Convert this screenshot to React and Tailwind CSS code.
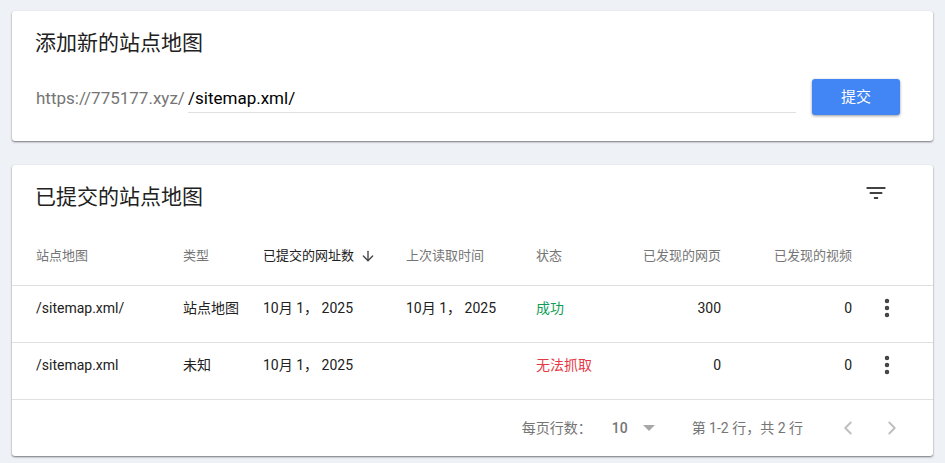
import React from 'react';
import { ArrowDown, ChevronLeft, ChevronRight, EllipsisVertical } from 'lucide-react';

const fontStack = 'font-["Roboto","Noto_Sans_CJK_SC",sans-serif]';
const gridCols = 'grid grid-cols-[147px_80px_143px_130px_90px_95px_131px_1fr] pl-6';

const rows = [
  { path: '/sitemap.xml/', type: '站点地图', submitted: '10月 1， 2025', read: '10月 1， 2025', status: '成功', statusColor: 'text-[#0f9d58]', pages: '300', videos: '0' },
  { path: '/sitemap.xml', type: '未知', submitted: '10月 1， 2025', read: '', status: '无法抓取', statusColor: 'text-[#e53945]', pages: '0', videos: '0' },
];

function Card({ className, children }) {
  return (
    <section className={`mx-3 rounded-[3px] bg-white shadow-[0_1px_2px_rgba(60,64,67,0.7)] ${className}`}>
      {children}
    </section>
  );
}

export default function App() {
  return (
    <div className={`${fontStack} flex h-[463px] w-[945px] flex-col gap-6 overflow-hidden bg-[#eef1f6] pt-[11px]`}>
      <Card className="h-[130px] px-6 pt-4">
        <h2 className="-ml-px text-[21px] leading-8 text-[#212121]">添加新的站点地图</h2>
        <div className="mt-5 flex items-start">
          <span className="w-[152px] pt-[7px] text-[17px] leading-6 text-[#757575]">https://775177.xyz/</span>
          <div className="h-[34px] w-[608px] border-b border-[#e0e0e0] pt-[7px] text-[17px] leading-6 text-[#000]">/sitemap.xml/</div>
          <button className="ml-4 h-9 w-[88px] rounded-[3px] bg-[#4285f4] text-[15px] text-white shadow-[0_1px_3px_rgba(0,0,0,0.4)]">提交</button>
        </div>
      </Card>

      <Card className="h-[291px]">
        <div className="flex items-start justify-between pl-6 pr-[36px] pt-4">
          <h2 className="-ml-px text-[21px] leading-8 text-[#212121]">已提交的站点地图</h2>
          <svg width="24" height="24" viewBox="0 0 24 24" fill="#424242" className="mr-[9px] scale-x-105">
            <path d="M10 18h4v-2h-4v2zM3 6v2h18V6H3zm3 7h12v-2H6v2z" />
          </svg>
        </div>

        <div className={`${gridCols} mt-[27px] h-[46px] items-start border-b border-[#e0e0e0] pt-1 text-[13px] leading-6 text-[#757575]`}>
          <span>站点地图</span>
          <span>类型</span>
          <span className="flex items-center gap-2 text-[#212121]">
            已提交的网址数
            <ArrowDown size={16} strokeWidth={2} className="-ml-[2px] text-[#424242]" />
          </span>
          <span>上次读取时间</span>
          <span>状态</span>
          <span className="whitespace-nowrap text-right">已发现的网页</span>
          <span className="text-right">已发现的视频</span>
        </div>

        {rows.map((row) => (
          <div key={row.path} className={`${gridCols} h-[57px] items-start border-b border-[#e0e0e0] pt-[10px] text-sm leading-6 text-[#212121]`}>
            <span>{row.path}</span>
            <span>{row.type}</span>
            <span>{row.submitted}</span>
            <span>{row.read}</span>
            <span className={`whitespace-nowrap ${row.statusColor}`}>{row.status}</span>
            <span className="text-right">{row.pages}</span>
            <span className="text-right">{row.videos}</span>
            <div className="flex justify-center pr-[10px]">
              <EllipsisVertical size={24} strokeWidth={2.5} className="-ml-px text-[#424242]" />
            </div>
          </div>
        ))}

        <div className="flex h-14 items-center justify-end pr-[30px] text-sm text-[#757575]">
          <span>每页行数：</span>
          <span className="ml-5 font-medium">10</span>
          <span className="ml-[15px] h-0 w-0 border-x-[6px] border-t-[6px] border-x-transparent border-t-[#a8a8a8]" />
          <span className="ml-[37px]">第 1-2 行，共 2 行</span>
          <ChevronLeft size={22} strokeWidth={2} className="ml-[34px] text-[#bdbdbd]" />
          <ChevronRight size={22} strokeWidth={2} className="ml-[22px] text-[#bdbdbd]" />
        </div>
      </Card>
    </div>
  );
}
